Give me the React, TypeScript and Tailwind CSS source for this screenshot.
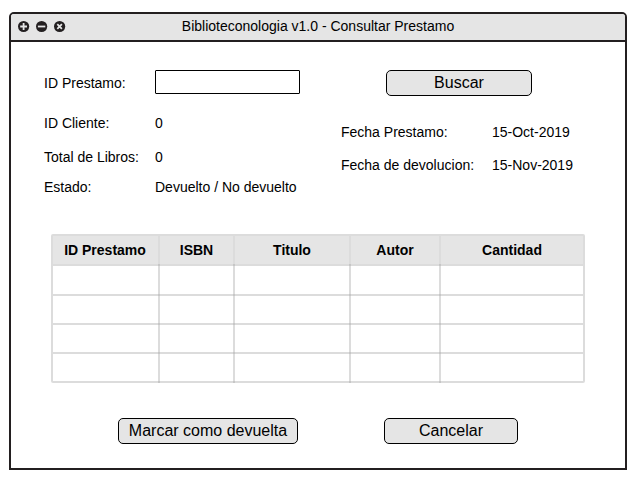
import type { ReactNode } from "react";

function WindowControls() {
  return (
    <svg width="48" height="12" viewBox="0.4 0.5 48 12" className="block shrink-0 overflow-visible">
      <g fill="#231f20">
        <circle cx="6" cy="6" r="5.6" />
        <circle cx="24" cy="6" r="5.6" />
        <circle cx="42" cy="6" r="5.6" />
      </g>
      <g stroke="#e5e5e5" strokeWidth="1.8" fill="none">
        <path d="M6 2.6v6.8M2.6 6h6.8" />
        <path d="M20.3 6h7.4" />
        <path d="M39.7 3.7l4.6 4.6M44.3 3.7l-4.6 4.6" />
      </g>
    </svg>
  );
}

function Button({ children, className }: { children: ReactNode; className: string }) {
  return (
    <button
      className={`flex h-[26px] items-center justify-center whitespace-nowrap rounded-[5px] border border-black bg-[#e5e5e5] text-base leading-6 ${className}`}
    >
      {children}
    </button>
  );
}

function Field({ label, value, className }: { label: string; value: string; className: string }) {
  return (
    <div className={`grid h-4 whitespace-nowrap leading-4 ${className}`}>
      <span>{label}</span>
      <span>{value}</span>
    </div>
  );
}

const headers = ["ID Prestamo", "ISBN", "Titulo", "Autor", "Cantidad"];
const rows = [0, 1, 2, 3];

const crossing =
  "relative after:absolute after:-bottom-0.5 after:-right-0.5 after:size-0.5 after:bg-[#c6c6c6]";

export default function App() {
  return (
    <div className="h-[481px] w-[635px] bg-white pl-[9px] pt-3 font-['Liberation_Sans',Arial,sans-serif] text-sm text-black">
      <main className="flex h-[458px] w-[618px] flex-col rounded-t-[5px] border-2 border-[#231f20] bg-white">
        <header className="grid h-7 shrink-0 grid-cols-[1fr_auto_1fr] items-center rounded-t-[3px] border-b-2 border-[#231f20] bg-[#e5e5e5] pl-[7px] pr-[7px]">
          <WindowControls />
          <h1 className="whitespace-nowrap pb-0.5 leading-4">Biblioteconologia v1.0 - Consultar Prestamo</h1>
        </header>

        <section className="flex h-48 shrink-0 pl-[33px] pt-7">
          <div className="w-[297px]">
            <div className="grid h-6 grid-cols-[111px_145px]">
              <label htmlFor="loan" className="pt-[5px] leading-4">ID Prestamo:</label>
              <input id="loan" className="h-6 rounded-[1px] border border-black bg-white px-1 outline-none" />
            </div>
            <Field label="ID Cliente:" value="0" className="mt-[21px] grid-cols-[111px_1fr]" />
            <Field label="Total de Libros:" value="0" className="mt-[18px] grid-cols-[111px_1fr]" />
            <Field label="Estado:" value="Devuelto / No devuelto" className="mt-[14px] grid-cols-[111px_1fr]" />
          </div>
          <div>
            <Button className="ml-[45px] w-[146px]">Buscar</Button>
            <Field label="Fecha Prestamo:" value="15-Oct-2019" className="mt-7 grid-cols-[151px_1fr]" />
            <Field label="Fecha de devolucion:" value="15-Nov-2019" className="mt-[17px] grid-cols-[151px_1fr]" />
          </div>
        </section>

        <div className="ml-10 grid w-[534px] shrink-0 grid-cols-[105px_73px_114px_88px_142px] grid-rows-[28px_28px_27px_27px_27px] gap-0.5 rounded-[2px] bg-[#dcdcdc] p-0.5">
          {headers.map((h, i) => (
            <div
              key={h}
              className={`flex items-center justify-center whitespace-nowrap bg-[#e5e5e5] font-bold leading-4 ${i === 0 ? "pr-px" : ""} ${i < 4 ? crossing : ""}`}
            >
              {h}
            </div>
          ))}
          {rows.map((r) =>
            headers.map((h, i) => <div key={`${h}-${r}`} className={`bg-white ${i < 4 ? crossing : ""}`} />),
          )}
        </div>

        <footer className="mt-[35px] flex gap-[86px] pl-[107px]">
          <Button className="w-[180px]">Marcar como devuelta</Button>
          <Button className="w-[134px]">Cancelar</Button>
        </footer>
      </main>
    </div>
  );
}
